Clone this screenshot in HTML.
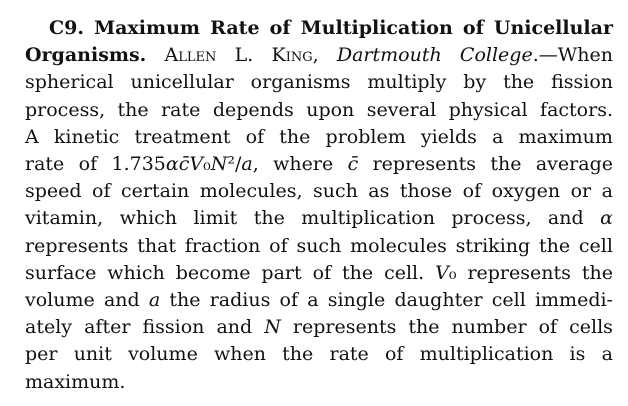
<!DOCTYPE html>
<html><head><meta charset="utf-8"><style>
html,body{margin:0;padding:0;background:#fff;width:628px;height:406px;overflow:hidden}
#t{position:absolute;left:25px;top:15px;width:588px;font-family:"DejaVu Serif","Liberation Serif",serif;font-size:19px;line-height:27.2px;color:#111}
.l{white-space:nowrap;display:flex;justify-content:space-between}
.l span{white-space:pre}
.sc{font-variant:small-caps}
b{font-weight:bold}
</style></head><body>
<div id="t">
<div class="l" style="padding-left:24px"><b>C9.</b><b>Maximum</b><b>Rate</b><b>of</b><b>Multiplication</b><b>of</b><b>Unicellular</b></div>
<div class="l"><span><b>Organisms.</b></span><span class="sc">Allen</span><span class="sc">L.</span><span class="sc">King,</span><span><i>Dartmouth</i></span><span><i>College</i>.—When</span></div>
<div class="l"><span>spherical</span><span>unicellular</span><span>organisms</span><span>multiply</span><span>by</span><span>the</span><span>fission</span></div>
<div class="l"><span>process,</span><span>the</span><span>rate</span><span>depends</span><span>upon</span><span>several</span><span>physical</span><span>factors.</span></div>
<div class="l"><span>A</span><span>kinetic</span><span>treatment</span><span>of</span><span>the</span><span>problem</span><span>yields</span><span>a</span><span>maximum</span></div>
<div class="l"><span>rate</span><span>of</span><span>1.735<i>αc̄V</i>₀<i>N</i>²/<i>a</i>,</span><span>where</span><span><i>c̄</i></span><span>represents</span><span>the</span><span>average</span></div>
<div class="l"><span>speed</span><span>of</span><span>certain</span><span>molecules,</span><span>such</span><span>as</span><span>those</span><span>of</span><span>oxygen</span><span>or</span><span>a</span></div>
<div class="l"><span>vitamin,</span><span>which</span><span>limit</span><span>the</span><span>multiplication</span><span>process,</span><span>and</span><span><i>α</i></span></div>
<div class="l"><span>represents</span><span>that</span><span>fraction</span><span>of</span><span>such</span><span>molecules</span><span>striking</span><span>the</span><span>cell</span></div>
<div class="l"><span>surface</span><span>which</span><span>become</span><span>part</span><span>of</span><span>the</span><span>cell.</span><span><i>V</i>₀</span><span>represents</span><span>the</span></div>
<div class="l"><span>volume</span><span>and</span><span><i>a</i></span><span>the</span><span>radius</span><span>of</span><span>a</span><span>single</span><span>daughter</span><span>cell</span><span>immedi-</span></div>
<div class="l"><span>ately</span><span>after</span><span>fission</span><span>and</span><span><i>N</i></span><span>represents</span><span>the</span><span>number</span><span>of</span><span>cells</span></div>
<div class="l"><span>per</span><span>unit</span><span>volume</span><span>when</span><span>the</span><span>rate</span><span>of</span><span>multiplication</span><span>is</span><span>a</span></div>
<div>maximum.</div>
</div>
</body></html>
